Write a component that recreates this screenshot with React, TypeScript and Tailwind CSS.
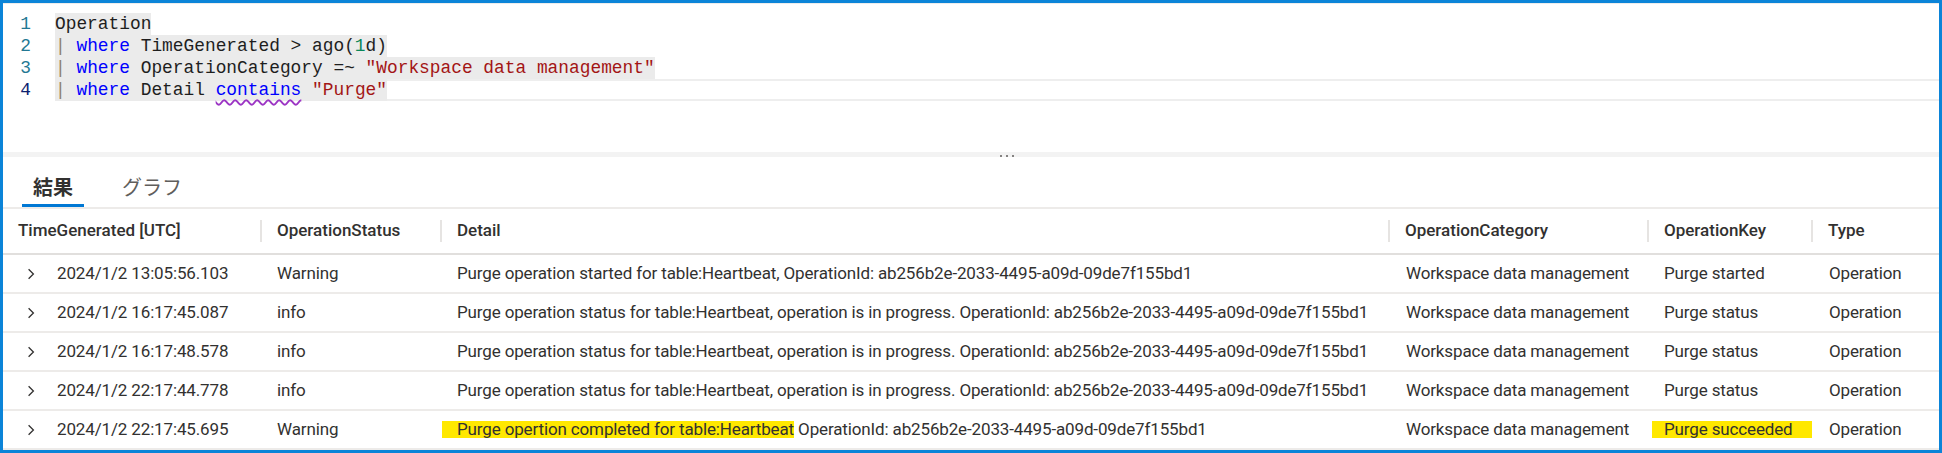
import React from "react";

type Tok = { t: string; c?: string; k?: "pipe" | "squig" };

const BLUE = "#0000ff";
const STR = "#a31515";
const NUM = "#098658";

const codeLines: Tok[][] = [
  [{ t: "Operation" }],
  [
    { t: "|", k: "pipe" },
    { t: " " },
    { t: "where", c: BLUE },
    { t: " TimeGenerated > ago(" },
    { t: "1", c: NUM },
    { t: "d)" },
  ],
  [
    { t: "|", k: "pipe" },
    { t: " " },
    { t: "where", c: BLUE },
    { t: " OperationCategory =~ " },
    { t: '"Workspace data management"', c: STR },
  ],
  [
    { t: "|", k: "pipe" },
    { t: " " },
    { t: "where", c: BLUE },
    { t: " Detail " },
    { t: "contains", c: BLUE, k: "squig" },
    { t: " " },
    { t: '"Purge"', c: STR },
  ],
];

const ID = "ab256b2e-2033-4495-a09d-09de7f155bd1";

type Row = {
  time: string;
  status: string;
  detail: string;
  hl?: string;
  cat: string;
  key: string;
  keyHl?: boolean;
  type: string;
};

const rows: Row[] = [
  {
    time: "2024/1/2 13:05:56.103",
    status: "Warning",
    detail: `Purge operation started for table:Heartbeat, OperationId: ${ID}`,
    cat: "Workspace data management",
    key: "Purge started",
    type: "Operation",
  },
  {
    time: "2024/1/2 16:17:45.087",
    status: "info",
    detail: `Purge operation status for table:Heartbeat, operation is in progress. OperationId: ${ID}`,
    cat: "Workspace data management",
    key: "Purge status",
    type: "Operation",
  },
  {
    time: "2024/1/2 16:17:48.578",
    status: "info",
    detail: `Purge operation status for table:Heartbeat, operation is in progress. OperationId: ${ID}`,
    cat: "Workspace data management",
    key: "Purge status",
    type: "Operation",
  },
  {
    time: "2024/1/2 22:17:44.778",
    status: "info",
    detail: `Purge operation status for table:Heartbeat, operation is in progress. OperationId: ${ID}`,
    cat: "Workspace data management",
    key: "Purge status",
    type: "Operation",
  },
  {
    time: "2024/1/2 22:17:45.695",
    status: "Warning",
    hl: "Purge opertion completed for table:Heartbeat",
    detail: ` OperationId: ${ID}`,
    cat: "Workspace data management",
    key: "Purge succeeded",
    keyHl: true,
    type: "Operation",
  },
];

const GRID = "grid grid-cols-[257px_180px_948px_259px_164px_1fr]";

function Chevron() {
  return (
    <svg width="8" height="12" viewBox="0 0 8 12" className="shrink-0">
      <path d="M1.6 1.2 L6.4 6 L1.6 10.8" fill="none" stroke="#323130" strokeWidth="1.3" />
    </svg>
  );
}

function HeaderCell({ label, first }: { label: string; first?: boolean }) {
  if (first) {
    return <div className="flex items-center pl-[15px]">{label}</div>;
  }
  return (
    <div className="flex items-center">
      <div className="w-[2px] h-[22px] bg-[#e6e4e2]" />
      <span className="ml-[15px]">{label}</span>
    </div>
  );
}

export default function App() {
  return (
    <div className="w-[1942px] h-[453px] border-[3px] border-[#0b84d8] bg-white overflow-hidden flex flex-col box-border">
      {/* Editor */}
      <div
        className="h-[149px] border-t border-[#ececec] pt-[9px] shrink-0"
        style={{ fontFamily: '"Liberation Mono", "DejaVu Sans Mono", monospace' }}
      >
        {codeLines.map((line, i) => (
          <div key={i} className="relative flex h-[22px] text-[17.85px] leading-[22px]">
            {i === 3 && (
              <div className="absolute top-0 bottom-0 left-[52px] right-0 border-y-2 border-[#eeeeee]" />
            )}
            <div
              className={
                "w-[28px] text-right " + (i === 3 ? "text-[#0b216f]" : "text-[#237893]")
              }
            >
              {i + 1}
            </div>
            <div className="ml-[24px] relative">
              <span className="inline-block h-[22px] bg-[#ebebeb] whitespace-pre text-[#1e1e1e]">
                {line.map((tk, j) => {
                  if (tk.k === "pipe") {
                    return (
                      <span key={j} className="text-[#8f826c]">
                        {tk.t}
                      </span>
                    );
                  }
                  if (tk.k === "squig") {
                    return (
                      <span
                        key={j}
                        className="underline decoration-wavy decoration-[#9c35c4] underline-offset-[4px] decoration-[1.5px]"
                        style={{ color: tk.c }}
                      >
                        {tk.t}
                      </span>
                    );
                  }
                  return (
                    <span key={j} style={tk.c ? { color: tk.c } : undefined}>
                      {tk.t}
                    </span>
                  );
                })}
              </span>
            </div>
          </div>
        ))}
      </div>

      {/* Splitter */}
      <div className="h-[5px] bg-[#f3f3f3] shrink-0 flex items-center pl-[997px]">
        <div className="flex gap-[4px] translate-y-[1px]">
          <div className="w-[2px] h-[2px] rounded-full bg-[#605e5c]" />
          <div className="w-[2px] h-[2px] rounded-full bg-[#605e5c]" />
          <div className="w-[2px] h-[2px] rounded-full bg-[#605e5c]" />
        </div>
      </div>

      <div
        className="flex flex-col text-[#323130]"
        style={{ fontFamily: 'Roboto, "Noto Sans CJK JP", sans-serif' }}
      >
        {/* Tabs */}
        <div className="h-[52px] border-b-2 border-[#edebe9] flex items-end pl-[19px] shrink-0">
          <div className="flex items-end gap-[27px]">
            <div className="px-[11px] flex flex-col">
              <div
                className="text-[20px] leading-[26px] font-semibold text-[#323130] pb-[4px]"
                style={{ fontFamily: '"Noto Sans CJK JP", sans-serif' }}
              >
                結果
              </div>
              <div className="h-[3px] -mx-[11px] bg-[#0078d4]" />
            </div>
            <div className="px-[11px] flex flex-col">
              <div
                className="text-[20px] leading-[26px] text-[#605e5c] pb-[7px]"
                style={{ fontFamily: '"Noto Sans CJK JP", sans-serif' }}
              >
                グラフ
              </div>
            </div>
          </div>
        </div>

        {/* Header */}
        <div className={GRID + " h-[46px] border-b-2 border-[#e1dfdd] text-[17px] font-medium shrink-0"}>
          <HeaderCell label="TimeGenerated [UTC]" first />
          <HeaderCell label="OperationStatus" />
          <HeaderCell label="Detail" />
          <HeaderCell label="OperationCategory" />
          <HeaderCell label="OperationKey" />
          <HeaderCell label="Type" />
        </div>

        {/* Rows */}
        {rows.map((r, i) => (
          <div
            key={i}
            className={
              GRID +
              " h-[39px] border-b-2 border-[#edebe9] text-[17px] tracking-[-0.14px] whitespace-nowrap shrink-0"
            }
          >
            <div className="flex items-center pl-[24px]">
              <Chevron />
              <span className="ml-[22px]">{r.time}</span>
            </div>
            <div className="flex items-center pl-[17px]">{r.status}</div>
            <div className="flex items-center pl-[17px]">
              {r.hl && (
                <span className="inline-block -ml-[15px] pl-[15px] bg-[#ffe800] leading-[17px] h-[17px]">
                  {r.hl}
                </span>
              )}
              <span className="whitespace-pre">{r.detail}</span>
            </div>
            <div className="flex items-center pl-[18px]">{r.cat}</div>
            <div className="flex items-center pl-[17px]">
              {r.keyHl ? (
                <span className="inline-block -ml-[12px] pl-[12px] pr-[19px] bg-[#ffe800] leading-[17px] h-[17px]">
                  {r.key}
                </span>
              ) : (
                r.key
              )}
            </div>
            <div className="flex items-center pl-[18px]">{r.type}</div>
          </div>
        ))}
      </div>
    </div>
  );
}
